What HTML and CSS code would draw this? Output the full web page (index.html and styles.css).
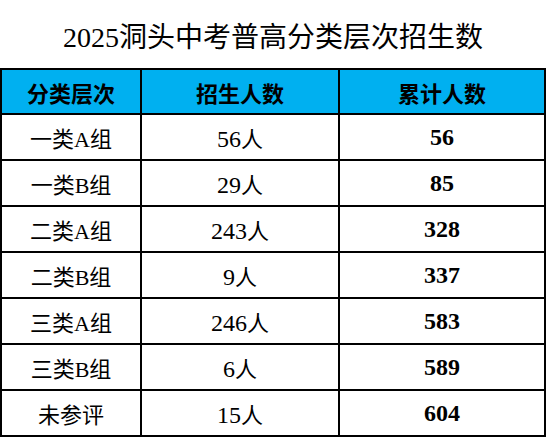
FILE: index.html
```html
<!DOCTYPE html>
<html>
<head>
    <meta charset="UTF-8">
    <title>2025洞头中考普高分类层次招生数</title>
    <link rel="stylesheet" href="styles.css">
</head>
<body>
    <div class="page">
        <div class="title">2025洞头中考普高分类层次招生数</div>

        <table class="quota">
            <thead>
                <tr>
                    <th class="col-level">分类层次</th>
                    <th class="col-count">招生人数</th>
                    <th>累计人数</th>
                </tr>
            </thead>
            <tbody>
                <tr><td>一类A组</td><td><span class="num">56</span>人</td><td class="total">56</td></tr>
                <tr><td>一类B组</td><td><span class="num">29</span>人</td><td class="total">85</td></tr>
                <tr><td>二类A组</td><td><span class="num">243</span>人</td><td class="total">328</td></tr>
                <tr><td>二类B组</td><td><span class="num">9</span>人</td><td class="total">337</td></tr>
                <tr><td>三类A组</td><td><span class="num">246</span>人</td><td class="total">583</td></tr>
                <tr><td>三类B组</td><td><span class="num">6</span>人</td><td class="total">589</td></tr>
                <tr><td>未参评</td><td><span class="num">15</span>人</td><td class="total">604</td></tr>
            </tbody>
        </table>
    </div>
</body>
</html>
```

FILE: styles.css
```css
* {
    margin: 0;
    padding: 0;
    box-sizing: border-box;
}

body {
    font-family: 'Liberation Serif', 'Noto Sans CJK SC', serif;
    color: #000;
    background: #fff;
    overflow: hidden;
}

.page {
    width: 546px;
}

.title {
    height: 68px;
    padding-top: 8px;
    line-height: 60px;
    text-align: center;
    font-size: 28px;
    font-weight: 400;
}

.quota {
    width: 546px;
    border-collapse: collapse;
    table-layout: fixed;
}

.quota th,
.quota td {
    border: 2px solid #000;
    text-align: center;
    vertical-align: middle;
}

.quota th {
    height: 45px;
    background-color: #00b0f0;
    font-size: 22px;
    font-weight: 700;
}

.quota td {
    height: 46px;
    font-size: 22px;
}

.quota .col-level {
    width: 140px;
}

.quota .col-count {
    width: 198px;
}

.quota .num {
    font-size: 24px;
}

.quota td.total {
    font-weight: 700;
    font-size: 24px;
}
```
